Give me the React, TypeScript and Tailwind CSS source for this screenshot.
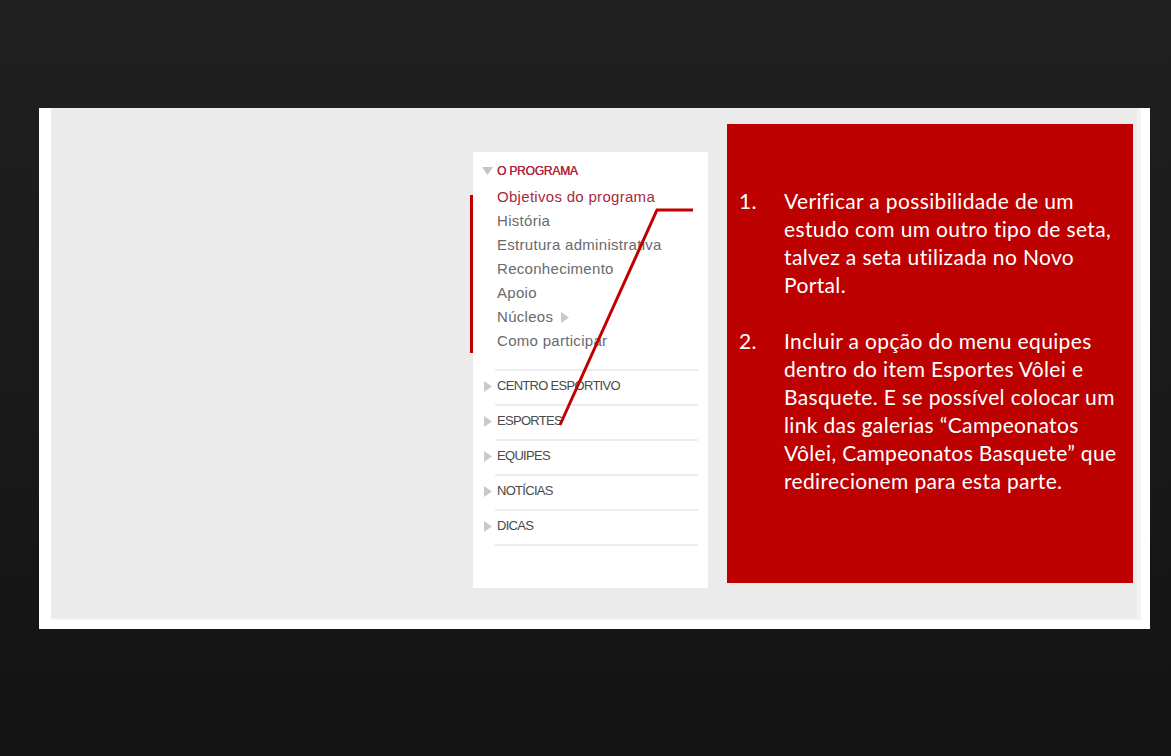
import React from "react";

const subItems = [
    "Objetivos do programa",
    "História",
    "Estrutura administrativa",
    "Reconhecimento",
    "Apoio",
    "Núcleos",
    "Como participar",
];

const sections = ["CENTRO ESPORTIVO", "ESPORTES", "EQUIPES", "NOTÍCIAS", "DICAS"];

function RightArrow({ className }: { className?: string }) {
    return (
        <svg width="8" height="11" viewBox="0 0 8 11" className={className}>
            <path d="M0 0 L8 5.5 L0 11 Z" fill="#c9c9c9" />
        </svg>
    );
}

function Sidebar() {
    return (
        <div className="relative mt-[44px] ml-[422px] w-[235px] h-[436px] bg-white" style={{ fontFamily: '"Liberation Sans", Arial, sans-serif' }}>
            <div className="flex items-center pt-[6px] pl-[9px] h-[26px] box-content">
                <svg width="11" height="8" viewBox="0 0 11 8" className="mr-[4px]">
                    <path d="M0 0 L11 0 L5.5 8 Z" fill="#c4c4c4" />
                </svg>
                <span className="text-[12px] tracking-[-0.2px] text-[#b0243a] [text-shadow:0.3px_0_0_#b0243a]">O PROGRAMA</span>
            </div>
            <ul className="pl-[24px] pt-[1px]">
                {subItems.map((item, i) => (
                    <li key={item} className={`flex items-center h-[24px] text-[15px] tracking-[0.3px] ${i === 0 ? "text-[#a8293c]" : "text-[#6a6a6a]"}`}>
                        {item}
                        {item === "Núcleos" && <RightArrow className="ml-[8px] mt-[1px]" />}
                    </li>
                ))}
            </ul>
            <ul className="mt-[16px] ml-[22px] mr-[10px] border-t-2 border-[#ececec]">
                {sections.map((s) => (
                    <li key={s} className="relative flex items-center h-[35px] pb-[3px] border-b-2 border-[#ececec]">
                        <RightArrow className="absolute -left-[11px] top-[10px]" />
                        <span className="pl-[2px] text-[13px] tracking-[-0.7px] text-[#4a4a4a]">{s}</span>
                    </li>
                ))}
            </ul>
            <div className="absolute -left-[3px] top-[43px] w-[3px] h-[158px] bg-[#c00000]" />
            <svg className="absolute left-0 top-0 pointer-events-none" width="235" height="436">
                <path d="M220 58 L184 58 L87 273" stroke="#c00000" strokeWidth="3" fill="none" />
            </svg>
        </div>
    );
}

function Notes() {
    return (
        <div className="mt-[16px] ml-[19px] w-[406px] h-[459px] bg-[#bd0000] text-white pt-[63px] pl-[12px]" style={{ fontFamily: 'Lato, "Open Sans", sans-serif' }}>
            <ol className="text-[21px] leading-[28px] tracking-[0.35px]">
                <li className="flex">
                    <span className="w-[45px] shrink-0">1.</span>
                    <span>
                        Verificar a possibilidade de um<br />
                        estudo com um outro tipo de seta,<br />
                        talvez a seta utilizada no Novo<br />
                        Portal.
                    </span>
                </li>
                <li className="flex mt-[28px]">
                    <span className="w-[45px] shrink-0">2.</span>
                    <span>
                        Incluir a opção do menu equipes<br />
                        dentro do item Esportes Vôlei e<br />
                        Basquete. E se possível colocar um<br />
                        link das galerias “Campeonatos<br />
                        Vôlei, Campeonatos Basquete” que<br />
                        redirecionem para esta parte.
                    </span>
                </li>
            </ol>
        </div>
    );
}

export default function App() {
    return (
        <div className="w-[1171px] h-[756px] overflow-hidden pt-[108px] pl-[39px] bg-gradient-to-b from-[#202020] via-[#1a1a1a] to-[#131313]">
            <div className="w-[1111px] h-[521px] bg-white pl-[12px] pr-[9px] pb-[9px]">
                <div className="flex items-start w-full h-full bg-[#ebebeb] border-r-4 border-b-2 border-[#f3f3f3]">
                    <Sidebar />
                    <Notes />
                </div>
            </div>
        </div>
    );
}
